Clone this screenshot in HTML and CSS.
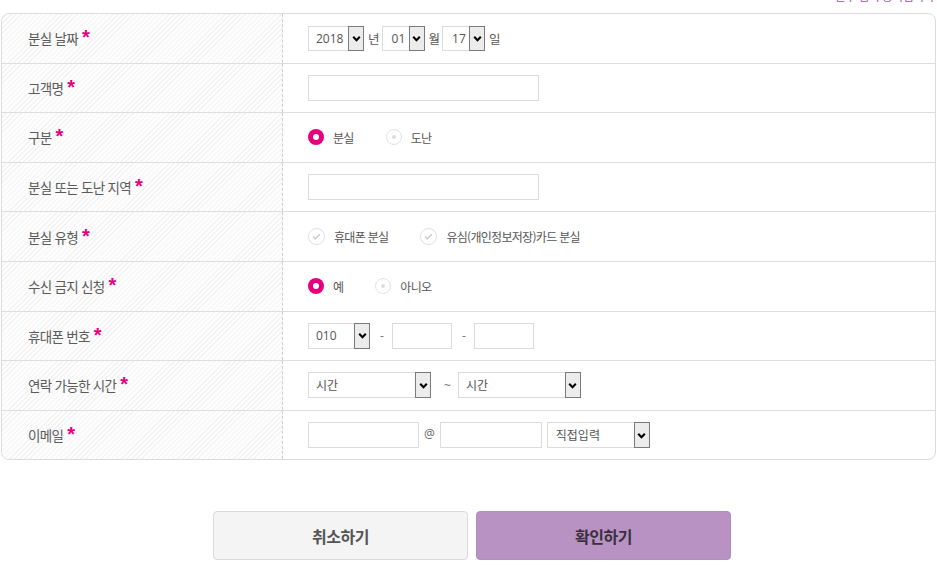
FILE: index.html
```html
<!DOCTYPE html>
<html lang="ko">
<head>
<meta charset="utf-8">
<title>분실 신고</title>
<link rel="stylesheet" href="styles.css">
</head>
<body>
<div class="page">
  <p class="note">필수 입력 항목입니다</p>
  <div class="form">
    <div class="row">
      <div class="label">분실 날짜<span class="req">*</span></div>
      <div class="field">
        <span class="sel w-year"><span class="val">2018</span><span class="arr"><svg viewBox="0 0 10 10"><path d="M2 3.5 5 6.5 8 3.5"/></svg></span></span>
        <span class="unit">년</span>
        <span class="sel w-md"><span class="val">01</span><span class="arr"><svg viewBox="0 0 10 10"><path d="M2 3.5 5 6.5 8 3.5"/></svg></span></span>
        <span class="unit">월</span>
        <span class="sel w-md"><span class="val">17</span><span class="arr"><svg viewBox="0 0 10 10"><path d="M2 3.5 5 6.5 8 3.5"/></svg></span></span>
        <span class="unit">일</span>
      </div>
    </div>
    <div class="row">
      <div class="label">고객명<span class="req">*</span></div>
      <div class="field"><span class="inp w-long"></span></div>
    </div>
    <div class="row">
      <div class="label">구분<span class="req">*</span></div>
      <div class="field">
        <span class="opt"><span class="radio on"></span><span class="txt">분실</span></span>
        <span class="opt"><span class="radio"></span><span class="txt">도난</span></span>
      </div>
    </div>
    <div class="row">
      <div class="label">분실 또는 도난 지역<span class="req">*</span></div>
      <div class="field"><span class="inp w-long"></span></div>
    </div>
    <div class="row">
      <div class="label">분실 유형<span class="req">*</span></div>
      <div class="field">
        <span class="opt"><span class="check"><svg viewBox="0 0 16 16"><path d="M4.3 8.1 6.9 10.7 11.6 5.5"/></svg></span><span class="txt">휴대폰 분실</span></span>
        <span class="opt"><span class="check"><svg viewBox="0 0 16 16"><path d="M4.3 8.1 6.9 10.7 11.6 5.5"/></svg></span><span class="txt">유심(개인정보저장)카드 분실</span></span>
      </div>
    </div>
    <div class="row">
      <div class="label">수신 금지 신청<span class="req">*</span></div>
      <div class="field">
        <span class="opt"><span class="radio on"></span><span class="txt">예</span></span>
        <span class="opt"><span class="radio"></span><span class="txt">아니오</span></span>
      </div>
    </div>
    <div class="row">
      <div class="label">휴대폰 번호<span class="req">*</span></div>
      <div class="field">
        <span class="sel tall w-phone"><span class="val">010</span><span class="arr"><svg viewBox="0 0 10 10"><path d="M2 3.5 5 6.5 8 3.5"/></svg></span></span>
        <span class="sep dash">-</span>
        <span class="inp w-num"></span>
        <span class="sep dash">-</span>
        <span class="inp w-num"></span>
      </div>
    </div>
    <div class="row">
      <div class="label">연락 가능한 시간<span class="req">*</span></div>
      <div class="field">
        <span class="sel tall w-time"><span class="val">시간</span><span class="arr"><svg viewBox="0 0 10 10"><path d="M2 3.5 5 6.5 8 3.5"/></svg></span></span>
        <span class="sep tilde">~</span>
        <span class="sel tall w-time"><span class="val">시간</span><span class="arr"><svg viewBox="0 0 10 10"><path d="M2 3.5 5 6.5 8 3.5"/></svg></span></span>
      </div>
    </div>
    <div class="row">
      <div class="label">이메일<span class="req">*</span></div>
      <div class="field">
        <span class="inp w-mail1"></span>
        <span class="sep at">@</span>
        <span class="inp w-mail2"></span>
        <span class="sel tall w-domain"><span class="val">직접입력</span><span class="arr"><svg viewBox="0 0 10 10"><path d="M2 3.5 5 6.5 8 3.5"/></svg></span></span>
      </div>
    </div>
  </div>
  <div class="actions">
    <button class="btn cancel" type="button">취소하기</button>
    <button class="btn ok" type="button">확인하기</button>
  </div>
</div>
</body>
</html>
```

FILE: styles.css
```css
html, body {
  margin: 0;
  padding: 0;
  background: #fff;
}
body {
  font-family: "Noto Sans CJK KR", "Noto Sans", sans-serif;
  color: #555;
  overflow: hidden;
}
.page {
  padding: 0 1px;
}
.note {
  margin: -12px 0 9px 0;
  height: 16px;
  line-height: 16px;
  text-align: right;
  font-size: 12px;
  letter-spacing: -0.6px;
  color: #9d55b5;
  padding-right: 2px;
}
.form {
  border: 1px solid #dcdcdc;
  border-radius: 8px;
  overflow: hidden;
}
.row {
  display: grid;
  grid-template-columns: 281px 1fr;
  height: 48.6px;
  border-bottom: 1px solid #dedede;
}
.row:last-child {
  border-bottom: 0;
}
.label {
  display: flex;
  align-items: center;
  padding-left: 26px;
  border-right: 1px dashed #cfcfcf;
  background: repeating-linear-gradient(135deg, #fdfdfd 0 2.6px, #f3f3f3 2.6px 3.6px);
  font-size: 13.5px;
  letter-spacing: -0.7px;
  color: #5a5a5a;
}
.req {
  font-family: "Liberation Sans", sans-serif;
  font-weight: bold;
  font-size: 20px;
  color: #e4007f;
  margin-left: 4px;
  letter-spacing: 0;
  line-height: 1;
  position: relative;
  top: -1px;
}
.field {
  display: flex;
  align-items: center;
  padding-left: 25px;
}
.sel {
  display: flex;
  align-items: stretch;
  box-sizing: border-box;
  height: 25px;
  border: 1px solid #dcdcdc;
  background: #fff;
}
.sel.tall {
  height: 26px;
}
.sel .val {
  flex: 1;
  display: flex;
  align-items: center;
  padding-left: 7px;
  font-family: "Open Sans", "Noto Sans CJK KR", sans-serif;
  font-size: 12px;
  color: #555;
}
.sel .arr {
  box-sizing: border-box;
  width: 16px;
  margin: -1px -1px -1px 0;
  border: 1px solid #7a7a7a;
  background: #ececec;
  display: flex;
  align-items: center;
  justify-content: center;
}
.sel .arr svg {
  width: 11px;
  height: 11px;
  fill: none;
  stroke: #000;
  stroke-width: 1.9;
}
.w-year { width: 56px; }
.w-md { width: 43px; }
.w-md .val { padding-left: 9px; }
.w-phone { width: 62px; }
.w-time { width: 123px; }
.w-domain { width: 103px; }
.w-domain .val { padding-left: 8px; }
.unit {
  font-size: 12.5px;
  color: #555;
  margin: 0 2px 0 4px;
}
.inp {
  display: block;
  box-sizing: border-box;
  height: 26px;
  border: 1px solid #dcdcdc;
  background: #fff;
}
.w-long { width: 231px; }
.w-num { width: 60px; }
.w-mail1 { width: 111px; }
.w-mail2 { width: 102px; }
.sep {
  color: #777;
  font-size: 12px;
  font-family: "Open Sans", sans-serif;
}
.dash { margin: 0 8px 0 10px; }
.tilde { margin: 0 7px 0 13px; }
.at { margin: 0 5px 0 5px; font-size: 12px; color: #666; position: relative; top: -2px; }
.w-mail2 + .sel { margin-left: 5px; }
.opt {
  display: flex;
  align-items: center;
  margin-right: 32px;
}
.opt .txt {
  margin-left: 9px;
  font-size: 12px;
  letter-spacing: -0.7px;
  color: #555;
}
.radio {
  box-sizing: border-box;
  width: 16px;
  height: 16px;
  border-radius: 50%;
  border: 1px solid #e3e3e3;
  background: #fff;
  display: flex;
  align-items: center;
  justify-content: center;
}
.radio::after {
  content: "";
  width: 4px;
  height: 4px;
  border-radius: 50%;
  background: #dcdcdc;
}
.radio.on {
  border: 0;
  background: #e6007e;
}
.radio.on::after {
  width: 6px;
  height: 6px;
  background: #fff;
}
.check {
  box-sizing: border-box;
  width: 17px;
  height: 17px;
  border-radius: 50%;
  border: 1px solid #e0e0e0;
  display: flex;
  align-items: center;
  justify-content: center;
}
.check svg {
  width: 15px;
  height: 15px;
  fill: none;
  stroke: #cdcdcd;
  stroke-width: 1.6;
}
.actions {
  display: flex;
  justify-content: center;
  gap: 8px;
  margin-top: 51px;
  padding-left: 7px;
}
.btn {
  box-sizing: border-box;
  width: 255px;
  height: 49px;
  border-radius: 4px;
  font-family: "Noto Sans CJK KR", sans-serif;
  font-weight: bold;
  font-size: 16px;
  letter-spacing: -0.5px;
  cursor: pointer;
}
.cancel {
  background: #f4f4f4;
  border: 1px solid #dadada;
  color: #555;
}
.ok {
  background: #b892c3;
  border: 1px solid #b38cbe;
  color: #3a2f3d;
}
```
